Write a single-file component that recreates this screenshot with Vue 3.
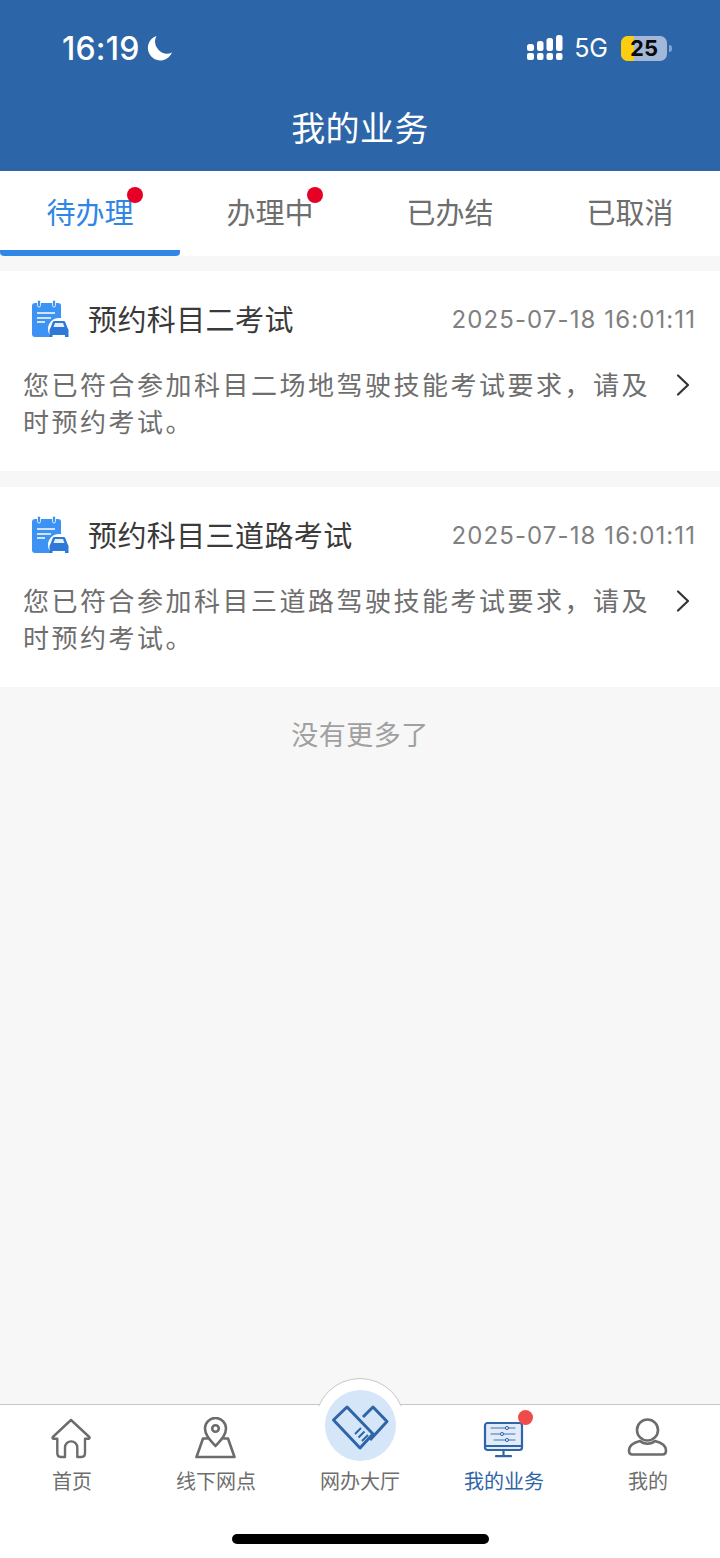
<template>
  <div class="page">
    <header class="top">
      <div class="status">
        <div class="time">
          <span>16:19</span>
          <svg class="moon" width="26" height="26" viewBox="0 0 26 26">
            <path d="M9.500 1A12.500 12.500 0 1 0 25 17.500 12 12 0 0 1 9.500 1Z" fill="#fff" />
          </svg>
        </div>
        <div class="sys">
          <svg width="36" height="26" viewBox="0 0 36 26" fill="#fff">
            <rect x="0" y="9" width="7" height="7" rx="2.500" />
            <rect x="0" y="18" width="7" height="7" rx="2" />
            <rect x="10" y="6" width="6.500" height="10" rx="2.500" />
            <rect x="10" y="18" width="6.500" height="7" rx="2" />
            <rect x="19.500" y="3" width="6.500" height="13" rx="2.500" />
            <rect x="19.500" y="18" width="6.500" height="7" rx="2" />
            <rect x="29" y="0" width="6.500" height="16" rx="2.500" />
            <rect x="29" y="18" width="6.500" height="7" rx="2" />
          </svg>
          <span class="net">5G</span>
          <div class="battery">
            <i class="charge"></i>
            <b>25</b>
          </div>
          <i class="nub"></i>
        </div>
      </div>
      <h1 class="title">我的业务</h1>
    </header>

    <nav class="tabs">
      <div v-for="(t, i) in tabs" :key="t.name" class="tab" :class="{ on: i === 0 }">
        <span class="tab-text">{{ t.name }}<i v-if="t.dot" class="dot"></i></span>
      </div>
    </nav>

    <main class="list">
      <section v-for="item in items" :key="item.title" class="card">
        <div class="card-head">
          <svg class="doc" width="38" height="38" viewBox="0 0 38 38">
            <rect x="1" y="3" width="29" height="34" rx="3" fill="#3d93f3" />
            <rect x="6.500" y="0" width="3" height="7" rx="1.500" fill="#3d93f3" stroke="#fff" stroke-width=".8" />
            <rect x="21.500" y="0" width="3" height="7" rx="1.500" fill="#3d93f3" stroke="#fff" stroke-width=".8" />
            <path d="M6 13h18M6 18h14M6 22h8" stroke="#fff" stroke-width="1.500" fill="none" />
            <circle cx="28" cy="29" r="11" fill="#fff" />
            <path d="M19.500 28l2-5.500c.3-.8 1-1.500 2-1.500h9c1 0 1.700.7 2 1.500l2 5.500c.6.5 1 1.200 1 2v7h-3.500v-2h-12.500v2H18.500v-7c0-.8.400-1.500 1-2Z" fill="#2e78d8" />
            <path d="M22.500 27l1.500-4h8l1.500 4Z" fill="#e3effc" />
          </svg>
          <span class="card-title">{{ item.title }}</span>
          <span class="card-date">2025-07-18 16:01:11</span>
        </div>
        <div class="card-body">
          <p class="card-desc">{{ item.desc }}</p>
          <svg class="chev" width="16" height="24" viewBox="0 0 16 24" fill="none">
            <path d="M3 2.500 13 12 3 21.500" stroke="#333" stroke-width="2.200" stroke-linecap="round" stroke-linejoin="round" />
          </svg>
        </div>
      </section>
      <p class="no-more">没有更多了</p>
    </main>

    <footer class="bar">
      <div class="bump"></div>
      <div class="bar-items">
        <div class="bar-item">
          <svg width="42" height="42" viewBox="0 0 42 42" fill="none" stroke="#6c6c6c" stroke-width="2.400" stroke-linejoin="round" stroke-linecap="round">
            <path d="M20 3 1.800 20c-.6.8-.1 1.800.9 1.800h3.600V36c0 2.500 1.500 4 3.500 4H14V30.500a6.100 6.100 0 0 1 12.300 0V40h4.200c2 0 3.500-1.500 3.500-4V21.800h3.400c1 0 1.500-1 .9-1.800Z" />
          </svg>
          <span>首页</span>
        </div>
        <div class="bar-item">
          <svg width="42" height="42" viewBox="0 0 42 42" fill="none" stroke="#6c6c6c" stroke-width="2.600" stroke-linejoin="round" stroke-linecap="round">
            <path d="M20.500 29C15.500 23.500 10 18.500 10 11.500a10.500 10.500 0 0 1 21 0C31 18.500 25.500 23.500 20.500 29Z" />
            <circle cx="20.500" cy="11.500" r="3.300" />
            <path d="M12 21.500H8L1.500 40h38L33 21.500h-4" />
          </svg>
          <span>线下网点</span>
        </div>
        <div class="bar-item center">
          <div class="hall">
            <svg width="71" height="71" viewBox="0 0 71 71" fill="none" stroke="#2f65a7" stroke-width="3" stroke-linejoin="round">
              <path d="M8.500 30 22 17l26 27-13 14Z" />
              <path d="M38 27 48 17l14 14.500L45 50" />
              <path d="M36 38l-6 6M39.500 41.500l-6 6M43 45l-6 6" stroke-width="2" />
            </svg>
          </div>
          <span>网办大厅</span>
        </div>
        <div class="bar-item active">
          <div class="desk">
            <svg width="42" height="42" viewBox="0 0 42 42" fill="none" stroke="#2f65a7" stroke-linecap="round">
              <rect x="2" y="6" width="37" height="27" rx="2.500" fill="#e2ecf8" stroke-width="2.200" />
              <path d="M2 29h37" stroke-width="1.800" />
              <path d="M20.500 33v6M13 39.200h15" stroke-width="2.200" />
              <path d="M8 11h24M8 17h24M11 23h21" stroke-width=".9" />
              <circle cx="24" cy="11" r="1.600" fill="#e2ecf8" stroke-width="1" />
              <circle cx="19" cy="17" r="1.600" fill="#e2ecf8" stroke-width="1" />
              <circle cx="24" cy="23" r="1.600" fill="#e2ecf8" stroke-width="1" />
            </svg>
            <i class="badge"></i>
          </div>
          <span>我的业务</span>
        </div>
        <div class="bar-item">
          <svg width="42" height="42" viewBox="0 0 42 42" fill="none" stroke="#6c6c6c" stroke-width="2.600" stroke-linejoin="round">
            <circle cx="20.500" cy="13" r="10.500" />
            <path d="M13 24c-6 1.500-11 4.500-11 9.500 0 2.500 1.500 4 3.500 4h30c2 0 3.500-1.500 3.500-4 0-5-5-8-11-9.500-2 1.800-4.500 2.700-7.500 2.700S15 25.800 13 24Z" />
          </svg>
          <span>我的</span>
        </div>
      </div>
      <div class="home-line"></div>
    </footer>
  </div>
</template>

<script setup>
const tabs = [
  { name: "待办理", dot: true },
  { name: "办理中", dot: true },
  { name: "已办结", dot: false },
  { name: "已取消", dot: false },
];

const items = [
  {
    title: "预约科目二考试",
    desc: "您已符合参加科目二场地驾驶技能考试要求，请及时预约考试。",
  },
  {
    title: "预约科目三道路考试",
    desc: "您已符合参加科目三道路驾驶技能考试要求，请及时预约考试。",
  },
];
</script>

<style>
html,
body {
  margin: 0;
  background: #f7f7f7;
}
</style>

<style scoped>
.page {
  width: 720px;
  height: 1558px;
  display: flex;
  flex-direction: column;
  overflow: hidden;
  background: #f7f7f7;
  font-family: "Noto Sans CJK SC", "Noto Sans", sans-serif;
}
.top {
  height: 171px;
  background: #2d66a8;
  color: #fff;
  flex: none;
}
.status {
  height: 96px;
  box-sizing: border-box;
  padding: 0 48px 0 62px;
  display: flex;
  justify-content: space-between;
  align-items: center;
}
.time {
  display: flex;
  align-items: center;
  gap: 7px;
  font-family: Inter, Roboto, sans-serif;
  font-size: 32px;
  font-weight: 500;
  letter-spacing: 0.2px;
}
.sys {
  display: flex;
  align-items: center;
}
.net {
  font-family: Inter, Roboto, sans-serif;
  font-size: 25px;
  margin: 0 13px 0 11px;
}
.battery {
  position: relative;
  width: 46px;
  height: 25px;
  border-radius: 7px;
  background: #a3b8d6;
  overflow: hidden;
  text-align: center;
}
.charge {
  position: absolute;
  left: 0;
  top: 0;
  bottom: 0;
  width: 13px;
  background: #fbcf0f;
}
.battery b {
  position: relative;
  display: block;
  font-family: Inter, Roboto, sans-serif;
  font-size: 22px;
  line-height: 25px;
  font-weight: 700;
  color: #0a0a0a;
  letter-spacing: 0;
}
.nub {
  width: 3px;
  height: 7px;
  margin-left: 2px;
  border-radius: 0 3px 3px 0;
  background: #7fa6d8;
}
.title {
  margin: 0;
  text-align: center;
  font-size: 34px;
  font-weight: 400;
  letter-spacing: 0.4px;
  line-height: 62px;
}
.tabs {
  height: 85px;
  flex: none;
  display: grid;
  grid-template-columns: repeat(4, 1fr);
  background: #fff;
}
.tab {
  display: flex;
  justify-content: center;
  padding-top: 17px;
  box-sizing: border-box;
  font-size: 29px;
  line-height: 46px;
  color: #6e6e6e;
}
.tab.on {
  color: #2f86e6;
  border-bottom: 6px solid #2f86e6;
  border-radius: 0 0 4px 4px;
}
.tab-text {
  position: relative;
}
.dot {
  position: absolute;
  right: -9px;
  top: -1px;
  width: 16px;
  height: 16px;
  border-radius: 50%;
  background: #e60026;
}
.list {
  flex: 1;
  padding-top: 15px;
}
.card {
  height: 200px;
  margin-bottom: 16px;
  background: #fff;
  box-sizing: border-box;
  padding: 0 24px 0 23px;
}
.card-head {
  height: 96px;
  margin-bottom: -2px;
  display: flex;
  align-items: center;
}
.doc {
  margin-left: 8px;
  flex: none;
}
.card-title {
  margin: 0 0 2px 19px;
  font-size: 29px;
  letter-spacing: 0.4px;
  color: #3a3a3a;
}
.card-date {
  margin-left: auto;
  font-size: 24px;
  letter-spacing: 1.1px;
  color: #808080;
  font-family: Inter, "Noto Sans", sans-serif;
}
.card-body {
  display: flex;
  justify-content: space-between;
}
.card-desc {
  margin: 0;
  width: 632px;
  font-size: 26px;
  line-height: 37px;
  letter-spacing: 2.500px;
  color: #6e6e6e;
}
.chev {
  margin: 0 5px 0 0;
  padding-top: 8px;
  flex: none;
}
.no-more {
  margin: 27px 0 0;
  text-align: center;
  font-size: 27px;
  letter-spacing: 0.5px;
  line-height: 40px;
  color: #a0a0a0;
}
.list .card:nth-of-type(2) {
  margin-bottom: 0;
}
.bar {
  position: relative;
  height: 154px;
  flex: none;
  background: #fff;
  border-top: 1px solid #c6c6c6;
  box-sizing: border-box;
}
.bump {
  position: absolute;
  left: 315px;
  top: -27px;
  width: 90px;
  height: 90px;
  box-sizing: border-box;
  border-radius: 50%;
  border: 1px solid #c6c6c6;
  background: #fff;
  clip-path: inset(0 0 62px 0);
}
.bar-items {
  position: relative;
  display: grid;
  grid-template-columns: repeat(5, 1fr);
  padding-top: 12px;
}
.bar-item {
  display: flex;
  flex-direction: column;
  align-items: center;
  gap: 7px;
  font-size: 20px;
  line-height: 30px;
  color: #6e6e6e;
}
.bar-item > svg,
.desk,
.hall {
  height: 42px;
  flex: none;
}
.bar-item.active {
  color: #2f65a7;
}
.desk {
  position: relative;
  width: 42px;
}
.badge {
  position: absolute;
  right: -8px;
  top: -7px;
  width: 15px;
  height: 15px;
  border-radius: 50%;
  background: #ef4b4b;
}
.hall {
  position: relative;
  width: 42px;
}
.hall svg {
  position: absolute;
  left: -14px;
  top: -27px;
  z-index: 1;
}
.hall::before {
  content: "";
  position: absolute;
  left: -14px;
  top: -27px;
  width: 71px;
  height: 71px;
  border-radius: 50%;
  background: #d5e6f8;
}
.home-line {
  position: absolute;
  left: 232px;
  top: 129px;
  width: 257px;
  height: 10px;
  border-radius: 5px;
  background: #000;
}
</style>
